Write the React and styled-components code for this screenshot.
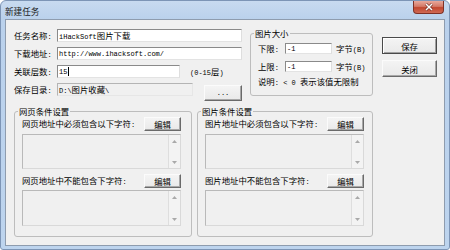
import React from "react";
import styled, { createGlobalStyle } from "styled-components";

const CJK = `"Noto Sans CJK SC", "Noto Sans", sans-serif`;
const MONO = `"Liberation Mono", "Noto Sans CJK SC", monospace`;

const GlobalStyle = createGlobalStyle`
  html, body {
    margin: 0;
    padding: 0;
    background: #ffffff;
  }
  body {
    font-family: ${CJK};
    font-size: 8.4px;
    line-height: 10px;
    color: #000;
  }
  * {
    box-sizing: border-box;
  }
`;

const Latin = styled.span`
  font-family: ${MONO};
  font-size: 7px;
`;

// wrap ASCII runs in a mono span, CJK stays in the body font
const Text = ({ children }) =>
  children
    .split(/([\x20-\x7e]+)/)
    .filter(Boolean)
    .map((part, i) =>
      /^[\x20-\x7e]+$/.test(part) ? (
        <Latin key={i}>{part}</Latin>
      ) : (
        <React.Fragment key={i}>{part}</React.Fragment>
      )
    );

const Window = styled.div`
  width: 450px;
  height: 250px;
  display: flex;
  flex-direction: column;
  padding: 0 4px 3px;
  background: linear-gradient(#c8daf0, #bad1ec 18px, #bdd4ee);
  border: 1px solid #7d95b6;
  border-radius: 6px 6px 3px 3px;
`;

const TitleBar = styled.div`
  height: 18px;
  display: flex;
  align-items: flex-start;
`;

const TitleText = styled.div`
  margin-top: 5px;
  font-size: 8.6px;
  color: #1a1a1a;
`;

const CloseButton = styled.div`
  margin-left: auto;
  margin-right: 1px;
  width: 31px;
  height: 13px;
  display: flex;
  align-items: center;
  justify-content: center;
  border: 1px solid #7e3127;
  border-top: none;
  border-radius: 0 0 4px 4px;
  background: linear-gradient(#e8a89c 0%, #d47a68 45%, #c2472f 55%, #cf6a55 100%);
`;

const Client = styled.div`
  flex: 1;
  display: flex;
  flex-direction: column;
  padding: 8px 0 0 8px;
  background: #f0f0f0;
  border: 1px solid #8e9cae;
`;

const TopSection = styled.div`
  display: flex;
  align-items: flex-start;
`;

const FormColumn = styled.div`
  width: 228px;
  margin-top: 1px;
  display: flex;
  flex-direction: column;
  gap: 5px;
`;

const FormRow = styled.div`
  display: flex;
  align-items: flex-start;
`;

const FieldLabel = styled.div`
  width: ${(p) => p.$width || 43}px;
  height: ${(p) => p.$height || 13}px;
  line-height: ${(p) => p.$height || 13}px;
  white-space: nowrap;
`;

const TextBox = styled.div`
  width: ${(p) => p.$width}px;
  height: ${(p) => p.$height || 13}px;
  padding: 0 1px;
  display: flex;
  align-items: center;
  white-space: nowrap;
  overflow: hidden;
  background: ${(p) => (p.$disabled ? "#f0f0f0" : "#ffffff")};
  border: 1px solid;
  border-color: ${(p) =>
    p.$disabled ? "#b4b4b4 #e6e6e6 #e6e6e6 #b4b4b4" : "#8a8a8a #dedede #e3e3e3 #8a8a8a"};
`;

const Caret = styled.span`
  display: inline-block;
  width: 1px;
  height: 9px;
  margin-left: 1px;
  background: #000;
`;

const Hint = styled.div`
  margin-left: ${(p) => p.$gap || 10}px;
  height: ${(p) => p.$height || 13}px;
  line-height: ${(p) => p.$height || 13}px;
  white-space: nowrap;
`;

const ClassicButton = styled.button`
  width: ${(p) => p.$w}px;
  height: ${(p) => p.$h}px;
  margin: ${(p) => p.$margin || 0};
  padding: 0;
  display: flex;
  align-items: center;
  justify-content: center;
  font-family: ${CJK};
  font-size: 8.4px;
  line-height: 10px;
  color: #000;
  background: linear-gradient(#f4f4f4, #e9e9e9);
  border: 1px solid;
  border-color: ${(p) =>
    p.$default ? "#4a4a4a" : "#fbfbfb #6a6a6a #6a6a6a #fbfbfb"};
  box-shadow: ${(p) =>
    p.$default
      ? "inset 1px 1px #ffffff, inset -1px -1px #a0a0a0"
      : "inset -1px -1px #a8a8a8"};
`;

const Group = styled.fieldset`
  width: ${(p) => p.$width}px;
  height: ${(p) => p.$height}px;
  margin: ${(p) => p.$margin || 0};
  padding: 0;
  min-width: 0;
  border: 1px solid #bdbdbd;
  border-radius: 3px;
`;

const GroupLegend = styled.legend`
  margin-left: 3px;
  padding: 0 1px;
  line-height: 10px;
  white-space: nowrap;
`;

const GroupBody = styled.div`
  display: flex;
  flex-direction: column;
  padding: ${(p) => p.$padding};
`;

const SizeRow = styled.div`
  display: flex;
  align-items: center;
  height: 11px;
  margin-bottom: 7px;
`;

const Note = styled.div`
  margin-top: -3px;
  white-space: nowrap;
`;

const ButtonColumn = styled.div`
  margin: 9px 0 0 9px;
  display: flex;
  flex-direction: column;
  gap: 6px;
`;

const BottomSection = styled.div`
  display: flex;
  gap: 5px;
  margin-top: 5px;
`;

const ConditionList = styled.div`
  width: 159px;
  display: flex;
  flex-direction: column;
`;

const ConditionRow = styled.div`
  height: 14px;
  display: flex;
  align-items: center;
  justify-content: space-between;
  margin-bottom: ${(p) => p.$after}px;
`;

const ListBox = styled.div`
  height: ${(p) => p.$height}px;
  margin-bottom: ${(p) => p.$after || 0}px;
  display: flex;
  justify-content: flex-end;
  background: #f0f0f0;
  border: 1px solid;
  border-color: #b9b9b9 #d9d9d9 #d9d9d9 #b9b9b9;
`;

const ScrollTrack = styled.div`
  width: 12px;
  display: flex;
  flex-direction: column;
  justify-content: space-between;
  align-items: center;
  padding: 5px 0 4px;
  background: #f3f3f3;
  border-left: 1px solid #dedede;
`;

const Arrow = ({ down }) => (
  <svg width="5" height="3" viewBox="0 0 5 3">
    <path d={down ? "M0 0H5L2.5 3Z" : "M0 3H5L2.5 0Z"} fill="#a9a9a9" />
  </svg>
);

const CloseGlyph = () => (
  <svg width="10" height="8" viewBox="0 0 10 8">
    <path d="M2 1L8 7M8 1L2 7" stroke="#6b2a22" strokeWidth="2.6" />
    <path d="M2 1L8 7M8 1L2 7" stroke="#ffffff" strokeWidth="1.5" />
  </svg>
);

const Condition = ({ label, after, listHeight, listAfter }) => (
  <>
    <ConditionRow $after={after}>
      <span>
        <Text>{label}</Text>
      </span>
      <ClassicButton $w={37} $h={14}>
        编辑
      </ClassicButton>
    </ConditionRow>
    <ListBox $height={listHeight} $after={listAfter}>
      <ScrollTrack>
        <Arrow />
        <Arrow down />
      </ScrollTrack>
    </ListBox>
  </>
);

const ConditionGroup = ({ title, prefix, width, padRight }) => (
  <Group $width={width} $height={131}>
    <GroupLegend>{title}</GroupLegend>
    <GroupBody $padding={`1px ${padRight}px 0 7px`}>
      <ConditionList>
        <Condition
          label={`${prefix}必须包含以下字符:`}
          after={3}
          listHeight={35}
          listAfter={5}
        />
        <Condition label={`${prefix}不能包含下字符:`} after={2} listHeight={36} />
      </ConditionList>
    </GroupBody>
  </Group>
);

const App = () => (
  <>
    <GlobalStyle />
    <Window>
      <TitleBar>
        <TitleText>新建任务</TitleText>
        <CloseButton>
          <CloseGlyph />
        </CloseButton>
      </TitleBar>
      <Client>
        <TopSection>
          <FormColumn>
            <FormRow>
              <FieldLabel>
                <Text>任务名称:</Text>
              </FieldLabel>
              <TextBox $width={185}>
                <span>
                  <Text>iHackSoft图片下载</Text>
                </span>
              </TextBox>
            </FormRow>
            <FormRow>
              <FieldLabel>
                <Text>下载地址:</Text>
              </FieldLabel>
              <TextBox $width={185}>
                <Latin>http://www.ihacksoft.com/</Latin>
              </TextBox>
            </FormRow>
            <FormRow>
              <FieldLabel>
                <Text>关联层数:</Text>
              </FieldLabel>
              <TextBox $width={123}>
                <Latin>15</Latin>
                <Caret />
              </TextBox>
              <Hint>
                <Text>(0-15层)</Text>
              </Hint>
            </FormRow>
            <FormRow>
              <FieldLabel>
                <Text>保存目录:</Text>
              </FieldLabel>
              <TextBox $width={136} $disabled>
                <span>
                  <Text>D:\图片收藏\</Text>
                </span>
              </TextBox>
              <ClassicButton $w={38} $h={16} $margin="2px 0 0 11px">
                <Latin>...</Latin>
              </ClassicButton>
            </FormRow>
          </FormColumn>

          <Group $width={123} $height={68} $margin="0 0 0 8px">
            <GroupLegend>图片大小</GroupLegend>
            <GroupBody $padding="5px 0 0 7px">
              <SizeRow>
                <FieldLabel $width={27} $height={11}>
                  <Text>下限:</Text>
                </FieldLabel>
                <TextBox $width={47} $height={11}>
                  <Latin>-1</Latin>
                </TextBox>
                <Hint $gap={4} $height={11}>
                  <Text>字节(B)</Text>
                </Hint>
              </SizeRow>
              <SizeRow>
                <FieldLabel $width={27} $height={11}>
                  <Text>上限:</Text>
                </FieldLabel>
                <TextBox $width={47} $height={11}>
                  <Latin>-1</Latin>
                </TextBox>
                <Hint $gap={4} $height={11}>
                  <Text>字节(B)</Text>
                </Hint>
              </SizeRow>
              <Note>
                <Text>说明: &lt; 0 表示该值无限制</Text>
              </Note>
            </GroupBody>
          </Group>

          <ButtonColumn>
            <ClassicButton $w={55} $h={17} $default>
              保存
            </ClassicButton>
            <ClassicButton $w={55} $h={17}>
              关闭
            </ClassicButton>
          </ButtonColumn>
        </TopSection>

        <BottomSection>
          <ConditionGroup title="网页条件设置" prefix="网页地址中" width={178} padRight={10} />
          <ConditionGroup title="图片条件设置" prefix="图片地址中" width={176} padRight={8} />
        </BottomSection>
      </Client>
    </Window>
  </>
);

export default App;
